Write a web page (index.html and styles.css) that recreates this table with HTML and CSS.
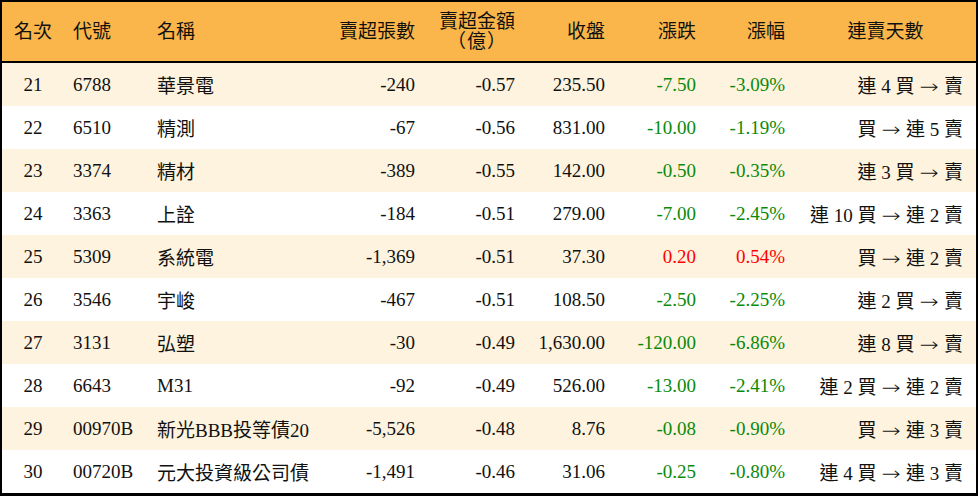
FILE: index.html
```html
<!DOCTYPE html>
<html lang="zh-Hant">
<head>
<meta charset="utf-8">
<link rel="stylesheet" href="styles.css">
</head>
<body>
<div class="frame">
<table class="rank">
<colgroup>
<col class="c-rank"><col class="c-code"><col class="c-name"><col class="c-vol"><col class="c-amt"><col class="c-close"><col class="c-chg"><col class="c-pct"><col class="c-days">
</colgroup>
<thead>
<tr>
<th class="ctr">名次</th>
<th class="lft">代號</th>
<th class="lft">名稱</th>
<th class="rgt">賣超張數</th>
<th class="rgt">賣超金額<br><span class="sub">（億）</span></th>
<th class="rgt">收盤</th>
<th class="rgt">漲跌</th>
<th class="rgt">漲幅</th>
<th class="ctr">連賣天數</th>
</tr>
</thead>
<tbody>
<tr class="alt"><td class="ctr">21</td><td class="lft">6788</td><td class="lft">華景電</td><td class="rgt">-240</td><td class="rgt">-0.57</td><td class="rgt">235.50</td><td class="rgt down">-7.50</td><td class="rgt down">-3.09%</td><td class="days">連 4 買 <span class="arr">→</span> 賣</td></tr>
<tr><td class="ctr">22</td><td class="lft">6510</td><td class="lft">精測</td><td class="rgt">-67</td><td class="rgt">-0.56</td><td class="rgt">831.00</td><td class="rgt down">-10.00</td><td class="rgt down">-1.19%</td><td class="days">買 <span class="arr">→</span> 連 5 賣</td></tr>
<tr class="alt"><td class="ctr">23</td><td class="lft">3374</td><td class="lft">精材</td><td class="rgt">-389</td><td class="rgt">-0.55</td><td class="rgt">142.00</td><td class="rgt down">-0.50</td><td class="rgt down">-0.35%</td><td class="days">連 3 買 <span class="arr">→</span> 賣</td></tr>
<tr><td class="ctr">24</td><td class="lft">3363</td><td class="lft">上詮</td><td class="rgt">-184</td><td class="rgt">-0.51</td><td class="rgt">279.00</td><td class="rgt down">-7.00</td><td class="rgt down">-2.45%</td><td class="days">連 10 買 <span class="arr">→</span> 連 2 賣</td></tr>
<tr class="alt"><td class="ctr">25</td><td class="lft">5309</td><td class="lft">系統電</td><td class="rgt">-1,369</td><td class="rgt">-0.51</td><td class="rgt">37.30</td><td class="rgt up">0.20</td><td class="rgt up">0.54%</td><td class="days">買 <span class="arr">→</span> 連 2 賣</td></tr>
<tr><td class="ctr">26</td><td class="lft">3546</td><td class="lft">宇峻</td><td class="rgt">-467</td><td class="rgt">-0.51</td><td class="rgt">108.50</td><td class="rgt down">-2.50</td><td class="rgt down">-2.25%</td><td class="days">連 2 買 <span class="arr">→</span> 賣</td></tr>
<tr class="alt"><td class="ctr">27</td><td class="lft">3131</td><td class="lft">弘塑</td><td class="rgt">-30</td><td class="rgt">-0.49</td><td class="rgt">1,630.00</td><td class="rgt down">-120.00</td><td class="rgt down">-6.86%</td><td class="days">連 8 買 <span class="arr">→</span> 賣</td></tr>
<tr><td class="ctr">28</td><td class="lft">6643</td><td class="lft">M31</td><td class="rgt">-92</td><td class="rgt">-0.49</td><td class="rgt">526.00</td><td class="rgt down">-13.00</td><td class="rgt down">-2.41%</td><td class="days">連 2 買 <span class="arr">→</span> 連 2 賣</td></tr>
<tr class="alt"><td class="ctr">29</td><td class="lft">00970B</td><td class="lft">新光BBB投等債20</td><td class="rgt">-5,526</td><td class="rgt">-0.48</td><td class="rgt">8.76</td><td class="rgt down">-0.08</td><td class="rgt down">-0.90%</td><td class="days">買 <span class="arr">→</span> 連 3 賣</td></tr>
<tr><td class="ctr">30</td><td class="lft">00720B</td><td class="lft">元大投資級公司債</td><td class="rgt">-1,491</td><td class="rgt">-0.46</td><td class="rgt">31.06</td><td class="rgt down">-0.25</td><td class="rgt down">-0.80%</td><td class="days">連 4 買 <span class="arr">→</span> 連 3 賣</td></tr>
</tbody>
</table>
</div>
</body>
</html>
```

FILE: styles.css
```css
html, body {
  margin: 0;
  padding: 0;
  background: #ffffff;
}
.frame {
  width: 974px;
  border: 2px solid #000;
  border-bottom-width: 3px;
}
.rank {
  width: 974px;
  border-collapse: collapse;
  table-layout: fixed;
  font-family: "Liberation Serif", "Noto Sans CJK TC", serif;
  font-size: 19px;
  color: #111;
}
.c-rank { width: 62px; }
.c-code { width: 84px; }
.c-name { width: 182px; }
.c-vol { width: 95px; }
.c-amt { width: 100px; }
.c-close { width: 90px; }
.c-chg { width: 91px; }
.c-pct { width: 89px; }
.c-days { width: 181px; }
.rank th {
  background: #fab64a;
  height: 59px;
  padding: 0;
  font-weight: normal;
  line-height: 20px;
  border-bottom: 2px solid #000;
  vertical-align: middle;
  white-space: nowrap;
}
.sub {
  display: inline-block;
  margin-right: 8px;
  letter-spacing: 1px;
}
.rank td {
  height: 43px;
  padding: 0;
  vertical-align: middle;
  white-space: nowrap;
}
.rank tr.alt td {
  background: #fef3de;
}
.ctr { text-align: center; }
.lft { text-align: left; padding-left: 9px !important; }
.rgt { text-align: right; padding-right: 10px !important; }
.days { text-align: right; padding-right: 13px !important; }
.arr {
  font-family: "DejaVu Sans", sans-serif;
  font-weight: 200;
  font-size: 19px;
  display: inline-block;
  transform: scaleX(1.2);
  margin: 0 2px;
}
.down { color: #0a8a0a; }
.up { color: #ff0000; }
```
